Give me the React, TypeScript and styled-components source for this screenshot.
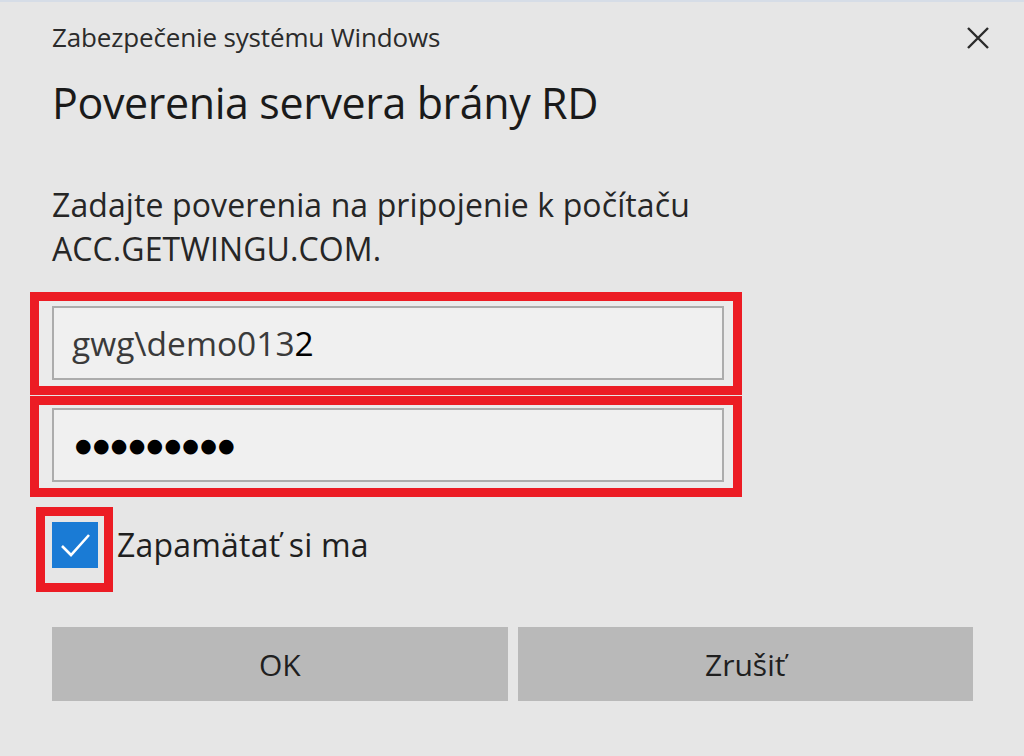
import React, { useState } from "react";
import styled, { createGlobalStyle } from "styled-components";

const GlobalStyle = createGlobalStyle`
  html, body {
    margin: 0;
    padding: 0;
    background: #e6e6e6;
  }
  * {
    box-sizing: border-box;
  }
`;

const Dialog = styled.div`
  width: 1024px;
  height: 756px;
  background: #e6e6e6;
  border-top: 2px solid #d6dde7;
  font-family: "Open Sans", "Noto Sans", sans-serif;
  color: #1f1f1f;
  overflow: hidden;
`;

const TitleBar = styled.div`
  height: 72px;
  display: flex;
  align-items: center;
  justify-content: space-between;
  padding: 0 34px 0 52px;
`;

const WindowTitle = styled.div`
  font-size: 26px;
  color: #2b2b2b;
  letter-spacing: -0.15px;
  margin-top: -2px;
`;

const CloseButton = styled.button`
  width: 24px;
  height: 24px;
  padding: 0;
  border: none;
  background: none;
  display: flex;
  align-items: center;
  justify-content: center;
  cursor: pointer;
`;

const Content = styled.div`
  padding: 0 51px 0 52px;
  display: flex;
  flex-direction: column;
`;

const Heading = styled.h1`
  margin: 5px 0 0;
  font-size: 43px;
  font-weight: 400;
  line-height: 48px;
  color: #1a1a1a;
  letter-spacing: -0.4px;
`;

const Message = styled.p`
  margin: 56px 0 0;
  font-size: 32px;
  line-height: 44px;
  color: #262626;
  letter-spacing: 0.1px;
`;

const FieldStack = styled.div`
  margin-top: 21px;
  display: flex;
  flex-direction: column;
  gap: 1px;
`;

const Highlight = styled.div<{ $top: number }>`
  width: 712px;
  margin-left: -22px;
  border: 9px solid #ec1c24;
  padding: ${(p) => p.$top}px 10px 6px 13px;
  background: #ebebeb;
`;

const Field = styled.div`
  height: 74px;
  width: 672px;
  border: 2px solid #acacac;
  background: #f0f0f0;
  display: flex;
  align-items: center;
  padding-left: 18px;
  font-size: 33.5px;
  color: #3a3a3a;
`;

const Caret = styled.span`
  color: #000;
`;

const Dots = styled.span`
  font-family: "DejaVu Sans", sans-serif;
  font-size: 19px;
  letter-spacing: 1.3px;
  color: #000;
  padding-left: 3px;
`;

const CheckRow = styled.label`
  margin-top: 10px;
  display: flex;
  align-items: center;
  gap: 4px;
  cursor: pointer;
`;

const CheckFrame = styled.div`
  margin-left: -16px;
  border: 9px solid #ec1c24;
  padding: 6px 6px 15px 7px;
`;

const CheckBox = styled.div<{ $checked: boolean }>`
  width: 46px;
  height: 46px;
  background: ${(p) => (p.$checked ? "#1a7bd5" : "#f0f0f0")};
  border: ${(p) => (p.$checked ? "none" : "2px solid #333")};
  display: flex;
  align-items: center;
  justify-content: center;
`;

const CheckLabel = styled.span`
  font-size: 32px;
  letter-spacing: 0.2px;
  color: #1f1f1f;
  margin-top: -10px;
`;

const ButtonRow = styled.div`
  margin-top: 35px;
  display: grid;
  grid-template-columns: 1fr 1fr;
  gap: 10px;
`;

const Button = styled.button`
  height: 74px;
  border: none;
  background: #b9b9b9;
  font-family: "Open Sans", "Noto Sans", sans-serif;
  font-size: 30px;
  color: #1f1f1f;
  cursor: pointer;
`;

export default function App() {
  const [remember, setRemember] = useState(true);

  return (
    <Dialog>
      <GlobalStyle />
      <TitleBar>
        <WindowTitle>Zabezpečenie systému Windows</WindowTitle>
        <CloseButton aria-label="Zavrieť">
          <svg width="24" height="24" viewBox="0 0 24 24">
            <path d="M2 2 L22 22 M22 2 L2 22" stroke="#2a2a2a" strokeWidth="2.4" />
          </svg>
        </CloseButton>
      </TitleBar>

      <Content>
        <Heading>Poverenia servera brány RD</Heading>
        <Message>
          Zadajte poverenia na pripojenie k počítaču
          <br />
          ACC.GETWINGU.COM.
        </Message>

        <FieldStack>
          <Highlight $top={5}>
            <Field>
              gwg\demo013<Caret>2</Caret>
            </Field>
          </Highlight>
          <Highlight $top={3}>
            <Field>
              <Dots>●●●●●●●●●</Dots>
            </Field>
          </Highlight>
        </FieldStack>

        <CheckRow onClick={() => setRemember(!remember)}>
          <CheckFrame>
            <CheckBox $checked={remember}>
              {remember && (
                <svg width="46" height="46" viewBox="0 0 46 46">
                  <path
                    d="M10 24 L19 33 L37 13"
                    fill="none"
                    stroke="#fff"
                    strokeWidth="2.6"
                  />
                </svg>
              )}
            </CheckBox>
          </CheckFrame>
          <CheckLabel>Zapamätať si ma</CheckLabel>
        </CheckRow>

        <ButtonRow>
          <Button>OK</Button>
          <Button>Zrušiť</Button>
        </ButtonRow>
      </Content>
    </Dialog>
  );
}
